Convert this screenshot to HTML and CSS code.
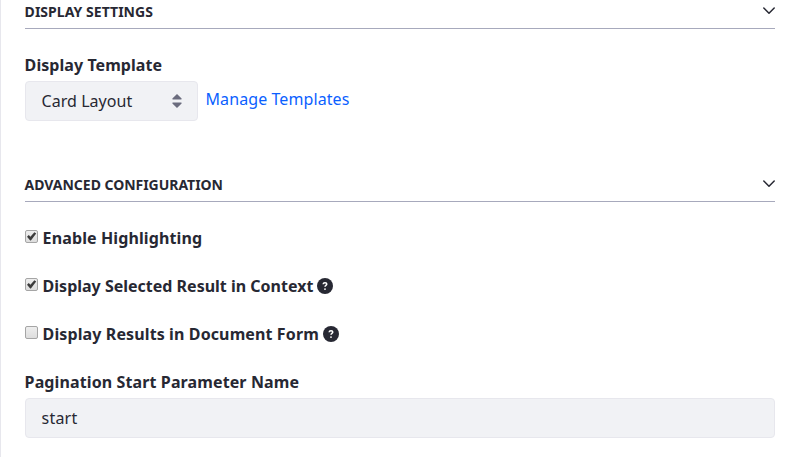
FILE: index.html
```html
<!DOCTYPE html>
<html lang="en">
<head>
<meta charset="utf-8">
<title>Configuration</title>
<link rel="stylesheet" href="styles.css">
</head>
<body>
<main class="panel">
  <section>
    <h3 class="heading"><span class="fit-heading">DISPLAY SETTINGS</span><svg class="chevron" viewBox="0 0 12 8"><path d="M.8 1 6 6.2 11.2 1"/></svg></h3>
    <div class="label template-label">Display Template</div>
    <div class="template-row">
      <div class="select"><span>Card Layout</span><svg class="caret" viewBox="0 0 10 14"><path d="M5 0 9.6 4.6Q10 5.5 9 5.5H1Q0 5.5 .4 4.6zM5 14 .4 9.4Q0 8.5 1 8.5H9Q10 8.5 9.6 9.4z"/></svg></div>
      <a class="link">Manage Templates</a>
    </div>
  </section>
  <section class="advanced">
    <h3 class="heading"><span>ADVANCED CONFIGURATION</span><svg class="chevron" viewBox="0 0 12 8"><path d="M.8 1 6 6.2 11.2 1"/></svg></h3>
    <div class="check"><span class="box"><svg viewBox="0 0 11 11"><path d="M1 5.8 2.8 4.1 4.4 5.7 8.4 1.2 10.2 2.6 4.9 9.5H4.2z"/></svg></span><span class="label wide">Enable Highlighting</span></div>
    <div class="check"><span class="box"><svg viewBox="0 0 11 11"><path d="M1 5.8 2.8 4.1 4.4 5.7 8.4 1.2 10.2 2.6 4.9 9.5H4.2z"/></svg></span><span class="label">Display Selected Result in Context</span><svg class="help" viewBox="0 0 16 16"><circle cx="8" cy="8" r="8"/><path d="M6.1 6.2C6.3 4.2 9.7 4.1 9.8 6.1 9.8 7.4 8 7.4 8 8.8"/><circle class="dot" cx="8" cy="11.1" r=".95"/></svg></div>
    <div class="check"><span class="box"></span><span class="label wide">Display Results in Document Form</span><svg class="help" viewBox="0 0 16 16"><circle cx="8" cy="8" r="8"/><path d="M6.1 6.2C6.3 4.2 9.7 4.1 9.8 6.1 9.8 7.4 8 7.4 8 8.8"/><circle class="dot" cx="8" cy="11.1" r=".95"/></svg></div>
    <div class="label wide field-label">Pagination Start Parameter Name</div>
    <div class="input">start</div>
  </section>
</main>
</body>
</html>
```
FILE: styles.css
```css
* { box-sizing: border-box; }
body { margin: 0; background: #fff; color: #272833; font: 16px/24px "Noto Sans", sans-serif; overflow: hidden; }
.panel { height: 457px; border-left: 1px solid #e7e7ed; padding: 0 16px 0 24px; }
.heading { margin: 0; height: 29px; border-bottom: 1px solid #a7a9bc; display: flex; justify-content: space-between; align-items: flex-start; font-size: 14px; line-height: 24px; font-weight: 700; letter-spacing: -0.03px; }
.heading span { margin-left: -0.4px; }
.heading .fit-heading { letter-spacing: 0.03px; }
.chevron { width: 12px; height: 8px; margin-top: 7px; fill: none; stroke: #272833; stroke-width: 1.5; stroke-linecap: round; stroke-linejoin: round; }
.label { font-weight: 700; margin-left: -0.4px; }
.wide { letter-spacing: 0.115px; }
.template-label { margin-top: 24px; height: 28px; letter-spacing: 0.06px; }
.template-row { display: flex; }
.select { width: 173px; height: 40px; padding: 0 15px 0 15.6px; display: flex; align-items: center; justify-content: space-between; background: #f1f2f5; border: 1px solid #e7e7ed; border-radius: 4px; letter-spacing: 0.04px; }
.caret { width: 10px; height: 14px; fill: #6b6c7e; }
.link { color: #0b5fff; margin: 6px 0 0 7.5px; letter-spacing: 0.09px; }
.advanced { padding-top: 52px; }
.check { display: flex; margin-top: 24px; height: 24px; }
.box { width: 13px; height: 13px; margin: 4px 5px 0 0; border: 1px solid #a5a5a5; border-radius: 2px; background: linear-gradient(#eee, #ddd); }
.box svg { display: block; width: 11px; height: 11px; fill: #3c3c3c; }
.help { width: 16px; height: 16px; margin: 4px 0 0 4px; fill: #272833; }
.help path { fill: none; stroke: #fff; stroke-width: 1.5; }
.help .dot { fill: #fff; }
.field-label { margin-top: 24px; height: 28px; }
.input { height: 40px; padding: 7px 15.6px; background: #f1f2f5; border: 1px solid #e7e7ed; border-radius: 4px; letter-spacing: 0.2px; }
```
